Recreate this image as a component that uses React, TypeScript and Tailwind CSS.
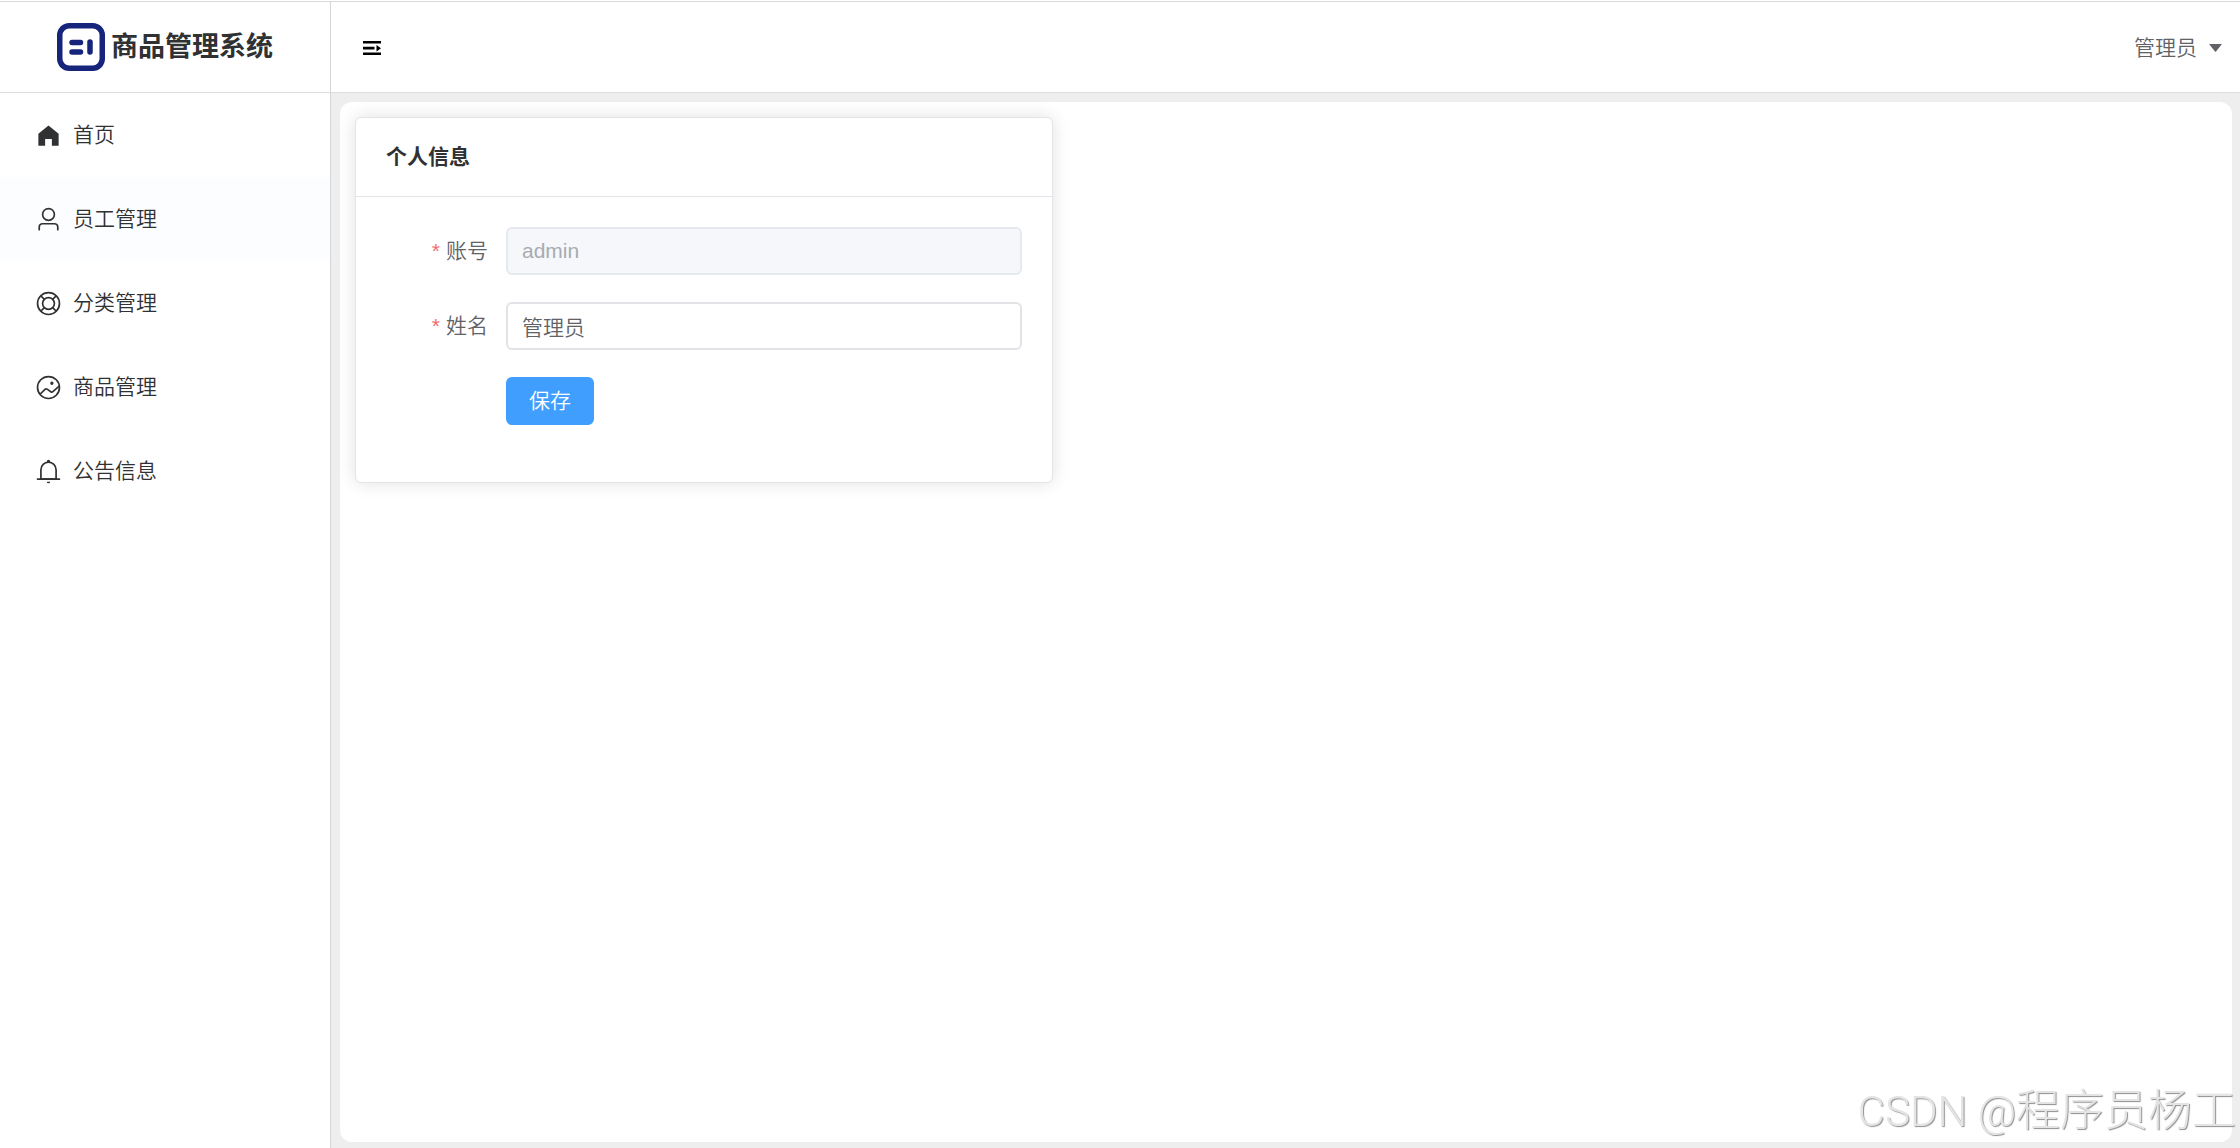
import { useState } from "react";
import type { ReactNode } from "react";
import clsx from "clsx";

function Icon({ children }: { children: ReactNode }) {
	return (
		<span className="flex w-9 shrink-0 justify-center">
			<svg
				viewBox="0 0 1024 1024"
				fill="currentColor"
				className="h-[27px] w-[27px]"
				aria-hidden="true"
			>
				{children}
			</svg>
		</span>
	);
}

const menu = [
	{
		label: "首页",
		icon: (
			<path d="M512 128 128 447.936V896h255.936V640H640v256h255.936V447.936z" />
		),
	},
	{
		label: "员工管理",
		icon: (
			<path d="M512 512a192 192 0 1 0 0-384 192 192 0 0 0 0 384m0 64a256 256 0 1 1 0-512 256 256 0 0 1 0 512m320 320v-96a96 96 0 0 0-96-96H288a96 96 0 0 0-96 96v96a32 32 0 1 1-64 0v-96a160 160 0 0 1 160-160h448a160 160 0 0 1 160 160v96a32 32 0 1 1-64 0" />
		),
	},
	{
		label: "分类管理",
		icon: (
			<g fill="none" stroke="currentColor" strokeWidth="64">
				<circle cx="512" cy="512" r="416" />
				<circle cx="512" cy="512" r="224" />
				<path d="M218 218l136 136M806 218 670 354M218 806l136-136M806 806 670 670" />
			</g>
		),
	},
	{
		label: "商品管理",
		icon: (
			<>
				<path d="M512 128a384 384 0 1 0 0 768 384 384 0 0 0 0-768m0-64a448 448 0 1 1 0 896 448 448 0 0 1 0-896" />
				<path d="M640 288q64 0 64 64t-64 64q-64 0-64-64t64-64M214.656 790.656l-45.312-45.312 185.664-185.6a96 96 0 0 1 123.712-10.24l138.24 98.688a32 32 0 0 0 39.872-2.176L906.688 422.4l42.624 47.744L699.52 693.696a96 96 0 0 1-119.808 6.592l-138.24-98.752a32 32 0 0 0-41.152 3.456l-185.664 185.6z" />
			</>
		),
	},
	{
		label: "公告信息",
		icon: (
			<>
				<path d="M512 64a64 64 0 0 1 64 64v64H448v-64a64 64 0 0 1 64-64" />
				<path d="M256 768h512V448a256 256 0 1 0-512 0zm256-640a320 320 0 0 1 320 320v384H192V448a320 320 0 0 1 320-320" />
				<path d="M96 768h832q32 0 32 32t-32 32H96q-32 0-32-32t32-32m352 128h128a64 64 0 0 1-128 0" />
			</>
		),
	},
];

function Logo() {
	return (
		<svg viewBox="0 0 48 48" className="h-12 w-12" aria-hidden="true">
			<rect
				x="2.75"
				y="2.75"
				width="42.5"
				height="42.5"
				rx="9.5"
				fill="none"
				stroke="#17247c"
				strokeWidth="5.5"
			/>
			<g stroke="#17247c" strokeWidth="5.5" strokeLinecap="round">
				<path d="M15 19.5h8.5M15 29h8.5M33 19v10" />
			</g>
		</svg>
	);
}

function Sidebar() {
	return (
		<aside className="w-[331px] shrink-0 border-r border-[#d6d6d8] bg-white">
			<div className="flex h-[91px] items-center justify-center gap-[6px] border-b border-[#dddddf]">
				<Logo />
				<span className="text-[27px] font-bold text-[#303133]">
					商品管理系统
				</span>
			</div>
			<nav>
				{menu.map((item) => (
					<a
						key={item.label}
						href="#"
						className={clsx(
							"flex h-[84px] items-center gap-[7px] px-[30px] text-[21px] text-[#303133]",
							item.label === "员工管理" && "bg-[#fbfdff]",
						)}
					>
						<Icon>{item.icon}</Icon>
						<span>{item.label}</span>
					</a>
				))}
			</nav>
		</aside>
	);
}

function Header() {
	return (
		<header className="flex h-[91px] items-center justify-between border-b border-[#dddddf] bg-white pt-[2px] pr-[18px] pl-8">
			<button type="button" aria-label="菜单">
				<svg viewBox="0 0 18 14" className="h-[14px] w-[18px]">
					<path d="M0 0h18v2.6H0zM0 5.8h11.5v2.6H0zM0 11.4h18V14H0zM13.5 4l4.5 3.2-4.5 3.2z" />
				</svg>
			</button>
			<button
				type="button"
				className="flex items-center gap-3 text-[21px] text-[#606266]"
			>
				管理员
				<svg viewBox="0 0 13 8" fill="currentColor" className="h-2 w-[13px]">
					<path d="M.6 0h11.8q.6 0 .2.6L7 7.5q-.5.5-1 0L.4.6Q0 0 .6 0z" />
				</svg>
			</button>
		</header>
	);
}

const inputClass =
	"h-12 min-w-0 flex-1 rounded-md border-2 px-[14px] text-[21px] outline-none";

function FormItem({
	id,
	label,
	children,
}: {
	id: string;
	label: string;
	children: ReactNode;
}) {
	return (
		<div className="flex">
			<label
				htmlFor={id}
				className="flex h-12 w-[120px] shrink-0 items-center justify-end gap-[6px] pr-[18px] text-[21px] text-[#606266]"
			>
				<span className="text-[#f56c6c]">*</span>
				{label}
			</label>
			{children}
		</div>
	);
}

function ProfileCard() {
	const [name, setName] = useState("管理员");
	return (
		<section className="w-[698px] max-w-full rounded-md border border-[#e2e4e8] bg-white text-[#303133] shadow-[0_0_18px_rgba(0,0,0,0.12)]">
			<h1 className="flex h-[79px] items-center border-b border-[#e2e4e8] px-[30px] text-[21px] font-bold">
				个人信息
			</h1>
			<form
				className="flex flex-col gap-[27px] px-[30px] pt-[30px] pb-[57px]"
				onSubmit={(e) => e.preventDefault()}
			>
				<FormItem id="username" label="账号">
					<input
						id="username"
						value="admin"
						disabled
						className={clsx(
							inputClass,
							"border-[#e6e9ef] bg-[#f5f7fa] text-[#a8abb2]",
						)}
					/>
				</FormItem>
				<FormItem id="name" label="姓名">
					<input
						id="name"
						value={name}
						onChange={(e) => setName(e.target.value)}
						className={clsx(inputClass, "border-[#e1e3e7] text-[#606266]")}
					/>
				</FormItem>
				<div className="flex pl-[120px]">
					<button
						type="submit"
						className="h-12 rounded-md bg-[#409eff] px-[23px] text-[21px] text-white"
					>
						保存
					</button>
				</div>
			</form>
		</section>
	);
}

export default function App() {
	return (
		<div className="flex min-h-screen flex-col bg-white pt-px font-['Liberation_Sans','Noto_Sans_CJK_SC',sans-serif] font-[350]">
			<div className="flex flex-1 border-t border-[#d9d9d9]">
				<Sidebar />
				<div className="flex min-w-0 flex-1 flex-col bg-[#eeeeee]">
					<Header />
					<main className="mt-[9px] mr-2 mb-[6px] ml-[9px] flex-1 rounded-xl bg-white p-[15px]">
						<ProfileCard />
					</main>
				</div>
			</div>
			<div className="pointer-events-none fixed right-1 bottom-1 font-['Roboto','Noto_Sans_CJK_SC',sans-serif] text-[44px] leading-[64px] font-light text-[#e4e4e4] [text-shadow:1px_1px_1px_#909090]">
				<span className="text-[42px]">CSDN @</span>
				程序员杨工
			</div>
		</div>
	);
}
